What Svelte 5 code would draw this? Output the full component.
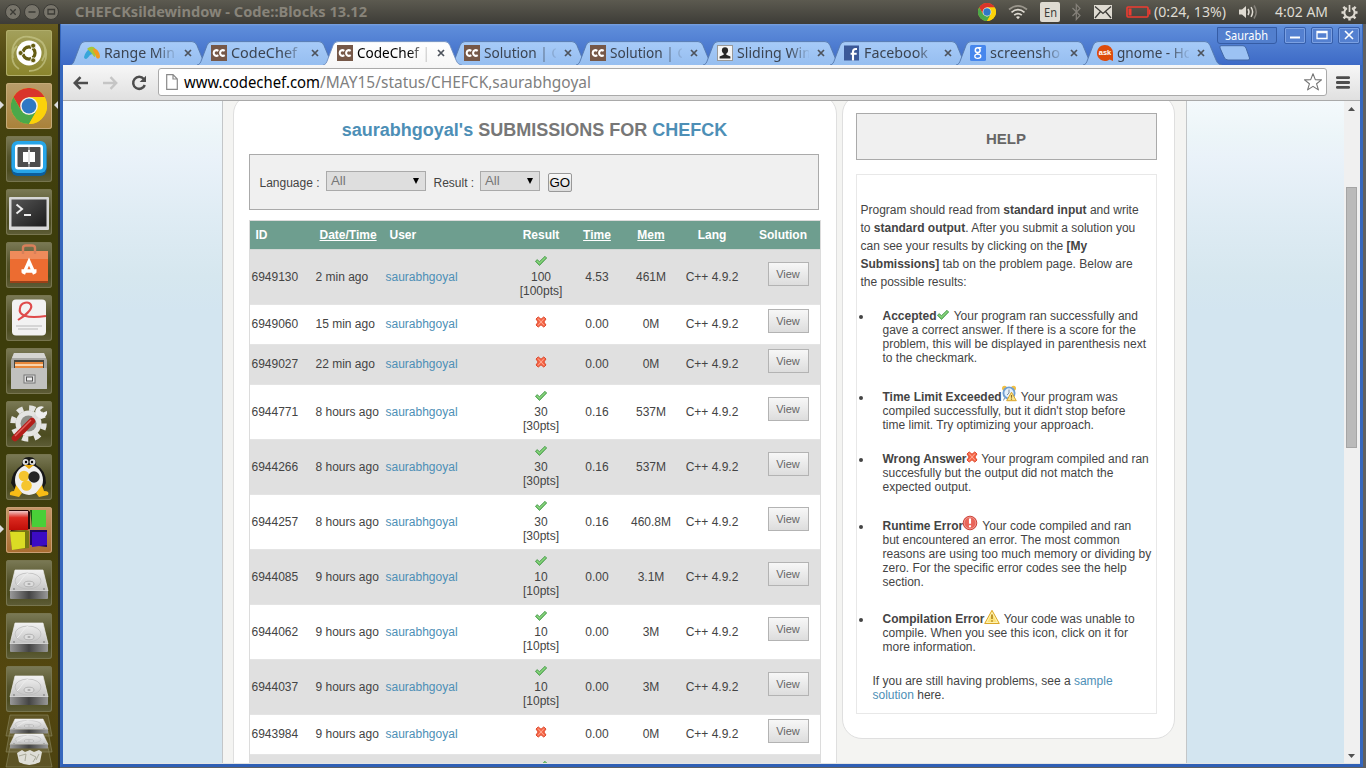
<script>
  const tabs = [
    { icon: 'range', title: 'Range Min', w: 71 },
    { icon: 'cc', title: 'CodeChef', w: 66 },
    { icon: 'cc', title: 'CodeChef |', w: 73, active: true },
    { icon: 'cc', title: 'Solution | C', w: 76 },
    { icon: 'cc', title: 'Solution | C', w: 76 },
    { icon: 'user', title: 'Sliding Win', w: 74 },
    { icon: 'fb', title: 'Facebook', w: 64 },
    { icon: 'google', title: 'screensho', w: 70 },
    { icon: 'ask', title: 'gnome - Ho', w: 75 }
  ];

  const rows = [
    { id: '6949130', when: '2 min ago', score: '100', time: '4.53', mem: '461M' },
    { id: '6949060', when: '15 min ago', time: '0.00', mem: '0M' },
    { id: '6949027', when: '22 min ago', time: '0.00', mem: '0M' },
    { id: '6944771', when: '8 hours ago', score: '30', time: '0.16', mem: '537M' },
    { id: '6944266', when: '8 hours ago', score: '30', time: '0.16', mem: '537M' },
    { id: '6944257', when: '8 hours ago', score: '30', time: '0.16', mem: '460.8M' },
    { id: '6944085', when: '9 hours ago', score: '10', time: '0.00', mem: '3.1M' },
    { id: '6944062', when: '9 hours ago', score: '10', time: '0.00', mem: '3M' },
    { id: '6944037', when: '9 hours ago', score: '10', time: '0.00', mem: '3M' },
    { id: '6943984', when: '9 hours ago', time: '0.00', mem: '0M' }
  ];

  const launchers = ['ubuntu', 'chrome', 'brackets', 'terminal', 'software', 'evince', 'files', 'settings', 'penguin', 'blocks', 'disk', 'disk', 'disk'];
</script>

{#snippet label(text, width, size, cls = '', height = 24)}
  <svg class="label {cls}" {width} {height}>
    <text x="0" y={height / 2 + size * 0.36} font-size={size} textLength={width} lengthAdjust="spacingAndGlyphs">{text}</text>
  </svg>
{/snippet}

{#snippet chromeLogo(size)}
  <svg width={size} height={size} viewBox="0 0 36 36">
    <circle cx="18" cy="18" r="18" fill="#f8c90c" />
    <path d="M2.4 9A18 18 0 0 1 33.6 9L18 9 10.2 13.5 10.2 22.5Z" fill="#d9342b" />
    <path d="M2.4 9 10.2 22.5 18 27 25.8 22.5 18 36A18 18 0 0 1 2.4 9Z" fill="#4ba84a" />
    <path d="M18 9H33.6A18 18 0 0 1 18 36L25.8 22.5Z" fill="#fbd20a" />
    <circle cx="18" cy="18" r="8.8" fill="#f2f2ee" />
    <circle cx="18" cy="18" r="7.4" fill="#2f78c4" />
  </svg>
{/snippet}

{#snippet check()}
  <svg class="ic check" width="14" height="12" viewBox="0 0 14 12">
    <path d="M1.4 6.3 3.3 4.6 5.4 6.7 11 1.3 12.7 3 5.5 10.5Z" fill="#6cc464" stroke="#45954a" stroke-width=".8" stroke-linejoin="round" />
    <path d="M3 5.8 5.4 8.2 11.4 2.4" stroke="#a3dd95" stroke-width=".8" fill="none" />
  </svg>
{/snippet}

{#snippet cross()}
  <svg class="ic cross" width="12" height="12" viewBox="0 0 12 12">
    <path d="M1 3 3.2 .9 6 3.2 8.8 .9 11 3 8.9 6 11 9 8.8 11.1 6 8.8 3.2 11.1 1 9 3.1 6Z" fill="#f7694a" stroke="#da3d20" stroke-width=".9" stroke-linejoin="round" />
    <path d="M3 2.5 9 9.3M9 2.6 3 9.4" stroke="#ffa993" stroke-width="1" />
  </svg>
{/snippet}

{#snippet warning(size)}
  <svg class="ic" width={size} height={size} viewBox="0 0 16 16">
    <path d="M8 1.3 15.3 14.5H.7Z" fill="#fbe276" stroke="#dba729" stroke-linejoin="round" />
    <path d="M8 3.6 13.5 13.5H2.5Z" fill="none" stroke="#fff6c4" stroke-width=".8" />
    <path d="M8 5.6V10M8 11.2V12.7" stroke="#b58a20" stroke-width="1.7" />
  </svg>
{/snippet}

{#snippet favicon(kind)}
  <svg class="fav" width="16" height="16" viewBox="0 0 16 16">
    {#if kind === 'range'}
      <path d="M0 12C1 8 3 5 6 4L9 9C5 9 5 13 2 14 1 14 0 13 0 12Z" fill="#38a6da" />
      <path d="M3 4C7 0 12 2 13 7L11 12C9 12 9 8 3 4Z" fill="#a5c63b" />
      <path d="M9 4C13 3 16 8 16 12 15 14 13 14 12 12 12 8 9 8 9 4Z" fill="#f39a1e" />
    {:else if kind === 'cc'}
      <rect width="16" height="16" fill="#765848" />
      <path d="M7.3 5.9C5 4.3 2.7 5.6 2.7 8S5 11.7 7.3 10.1M13.7 5.9C11.4 4.3 9.1 5.6 9.1 8S11.4 11.7 13.7 10.1" fill="none" stroke="#fff" stroke-width="2.1" />
    {:else if kind === 'user'}
      <rect x=".5" y=".5" width="15" height="15" fill="#f4f4f4" stroke="#999" />
      <circle cx="8" cy="5.4" r="3.1" fill="#272727" />
      <path d="M6.7 7H9.3V9.7L13.4 11.4V13.6H2.6V11.4L6.7 9.7Z" fill="#272727" />
    {:else if kind === 'fb'}
      <rect y=".5" width="15" height="15" fill="#3b5998" />
      <path d="M9 15.5V6.8Q9 4 11.7 4H13M6.6 8.7H12.7" fill="none" stroke="#fff" stroke-width="2.1" />
    {:else if kind === 'google'}
      <rect width="16" height="16" rx="1.5" fill="#4787ed" />
      <circle cx="7.7" cy="5.2" r="2.4" fill="none" stroke="#fff" stroke-width="1.5" />
      <ellipse cx="7.8" cy="11.3" rx="3" ry="2.1" fill="none" stroke="#fff" stroke-width="1.3" />
      <path d="M8 2.6H11.4M8.4 7.3Q5.7 8.2 8.6 9.3" fill="none" stroke="#fff" stroke-width="1.2" />
    {:else}
      <path d="M8 0A8 8 0 0 1 16 8V16L12.6 14.5A8 8 0 1 1 8 0Z" fill="#dd4b0b" />
      <text x="8" y="10.4" text-anchor="middle" font-size="7.5" font-weight="700" fill="#fff" textLength="12.5">ask</text>
    {/if}
  </svg>
{/snippet}

{#snippet diskShape()}
  <path d="M9 10H37L42 31H4Z" fill="url(#silver)" stroke="#eee" stroke-width=".7" />
  <path d="M4 31H42V38Q42 39 41 39H5Q4 39 4 38Z" fill="url(#diskedge)" />
  <ellipse cx="22" cy="21" rx="13" ry="8" fill="none" stroke="#bcbcbc" stroke-width=".8" />
  <ellipse cx="23" cy="24" rx="5" ry="2.8" fill="#ddd" stroke="#aaa" stroke-width=".8" />
  <ellipse cx="23" cy="24" rx="1.6" ry=".9" fill="#aaa" />
  <path d="M11 25C17 20 18 11 30 11" fill="none" stroke="#eee" />
  <circle cx="8" cy="29" r=".9" fill="#888" /><circle cx="38" cy="29" r=".9" fill="#888" />
{/snippet}

<svg class="defs" width="0" height="0">
  <defs>
    <linearGradient id="silver" x2="0" y2="1"><stop stop-color="#f2f2f2" /><stop offset="1" stop-color="#c2c2c2" /></linearGradient>
    <linearGradient id="diskedge"><stop stop-color="#999" /><stop offset=".5" stop-color="#444" /><stop offset="1" stop-color="#999" /></linearGradient>
    <linearGradient id="tabfill" x2="0" y2="1"><stop stop-color="#a7cbf8" /><stop offset="1" stop-color="#96bef0" /></linearGradient>
    <linearGradient id="tabactive" x2="0" y2="1"><stop stop-color="#fff" /><stop offset="1" stop-color="#f7f7f7" /></linearGradient>
    <linearGradient id="termfill" x2="1" y2="1"><stop stop-color="#555" /><stop offset="1" stop-color="#1c1c1c" /></linearGradient>
    <linearGradient id="redface" x2="0" y2="1"><stop stop-color="#f0c8c8" /><stop offset=".35" stop-color="#dc2a20" /><stop offset="1" stop-color="#c00e08" /></linearGradient>
  </defs>
</svg>

<div class="desktop">
  <header class="panel">
    <div class="wmbuttons">
      <svg width="60" height="24" viewBox="0 0 60 24" fill="#77746a" stroke="#3c3b36">
        <circle cx="13" cy="12" r="7.5" /><circle cx="32" cy="12" r="7.5" /><circle cx="51" cy="12" r="7.5" />
        <path d="M10.3 9.3 15.7 14.7M15.7 9.3 10.3 14.7M28.5 12H35.5M48 9.5H54.5V14H48Z" fill="none" stroke-width="1.3" />
      </svg>
    </div>
    {@render label('CHEFCKsildewindow - Code::Blocks 13.12', 292, 14.5, 'wmtitle')}
    <div class="indicators">
      <span>{@render chromeLogo(18)}</span>
      <svg class="wifi" width="20" height="18" viewBox="0 0 20 18" fill="none" stroke="#dfdbd2" stroke-width="1.7">
        <path d="M1 6.5Q10-.8 19 6.5" stroke="#9a968c" /><path d="M3.5 9.3Q10 4 16.5 9.3" /><path d="M6.2 12.2Q10 9 13.8 12.2" /><path d="M8 14 10 16.3 12 14Q10 12.6 8 14Z" fill="#dfdbd2" stroke="none" />
      </svg>
      <span class="lang">{@render label('En', 13, 13, 'dark', 20)}</span>
      <svg class="bt" width="13" height="18" viewBox="0 0 13 18" fill="none" stroke="#85817a" stroke-width="1.2"><path d="M2.5 5 10 12.5 6.3 16.5V1.5L10 5.4 2.5 13" /></svg>
      <svg class="mail" width="18" height="14" viewBox="0 0 18 14"><path fill="#dfdbd2" d="M0 0H18V14H0Z" /><path d="M1 1.5 9 8.5 17 1.5M1 13 6.5 6.5M17 13 11.5 6.5" fill="none" stroke="#3c3b37" stroke-width="1.3" /></svg>
      <svg class="batt" width="25" height="12" viewBox="0 0 25 12"><rect x="1" y="1" width="21" height="10" rx="1" fill="none" stroke="#ef3b30" stroke-width="1.6" /><path fill="#ef3b30" d="M2.5 2.5H5.5V9.5H2.5ZM23 3.5H24.5V8.5H23Z" /></svg>
      {@render label('(0:24, 13%)', 72, 15, 'light')}
      <svg class="vol" width="20" height="16" viewBox="0 0 20 16" fill="none" stroke="#dfdbd2" stroke-width="1.5"><path d="M0 5.5H3L7 2V14L3 10.5H0Z" fill="#dfdbd2" stroke="none" /><path d="M9 5Q11 8 9 11M12 3.2Q15.2 8 12 12.8" /><path d="M15 1.5Q19.5 8 15 14.5" stroke="#85817a" /></svg>
      {@render label('4:02 AM', 53, 15, 'light')}
      <svg class="gear" width="17" height="17" viewBox="0 0 18 18" fill="none" stroke="#dfdbd2"><path d="M6.3 4.3A5.5 5.5 0 1 0 11.7 4.3" stroke-width="2.2" /><path d="M9 1V8.5" stroke-width="1.8" /><path d="M2.5 3 4.5 5M15.5 3 13.5 5M.5 9H3M15 9H17.5M2.7 15.3 4.6 13.4M15.3 15.3 13.4 13.4M9 15V17.6" stroke-width="2.6" /></svg>
    </div>
  </header>

  <div class="workspace">
    <nav class="launcher">
      {#each launchers as app}
        <div class="tile {app}">
          {#if app === 'chrome' || app === 'blocks'}<i class="pip left"></i>{/if}
          {#if app === 'chrome'}<i class="pip right"></i>{/if}
          <svg width="46" height="46" viewBox="0 0 46 46">
            {#if app === 'ubuntu'}
              <path d="M7 28C4 15 12 5 24 7 38 9 43 19 36 31M13 39C5 34 4 23 11 16M23 41C37 41 44 28 38 15" fill="none" stroke="#c9c98d" stroke-width="1.8" opacity=".65" />
              <circle cx="23" cy="23" r="12.5" fill="#fff" />
              <circle cx="23" cy="23" r="6" fill="none" stroke="#655d13" stroke-width="3.3" />
              <path d="M23 23H11M23 23 29 12.5M23 23 29 33.5" stroke="#fff" stroke-width="1.4" />
              <circle cx="23" cy="23" r="4.3" fill="#fff" />
              <g fill="#655d13" stroke="#fff" stroke-width=".8"><circle cx="14.6" cy="23" r="2.5" /><circle cx="27.2" cy="15.7" r="2.5" /><circle cx="27.2" cy="30.3" r="2.5" /></g>
            {:else if app === 'chrome'}
              <g transform="translate(5 5)">{@render chromeLogo(36)}</g>
            {:else if app === 'brackets'}
              <rect x="5.5" y="7" width="35" height="33" rx="6" fill="#0c5e9c" /><rect x="5.5" y="5" width="35" height="32" rx="6" fill="#27a5e8" />
              <rect x="9" y="8.5" width="28" height="25" rx="3" fill="#fff" /><rect x="11.5" y="11" width="23" height="20" rx="1" fill="#4d4d4d" />
              <path d="M17 16H22V14H24V16H29V26H24V28H22V26H17Z" fill="#fff" /><path d="M22.5 11H23.5V31H22.5Z" fill="#c9c9c9" />
            {:else if app === 'terminal'}
              <rect x="3" y="8" width="40" height="33" rx="1" fill="#d7d7d7" /><rect x="5.5" y="10.5" width="35" height="27" fill="url(#termfill)" />
              <path d="M10.5 15.5 16 20 10.5 24.5M18 26H25" fill="none" stroke="#eee" stroke-width="2" />
            {:else if app === 'software'}
              <path d="M4 9H42L42 41H4Z" fill="#ec6c31" /><path d="M4 9H42L42 17H4Z" fill="#ef8b5b" /><path d="M4 39H42V41H4Z" fill="#9b4018" />
              <path d="M17 12V6Q17 3.5 20 3.5H26Q29 3.5 29 6V12" fill="none" stroke="#d77f59" stroke-width="2.4" />
              <path d="M17.5 32 23 19.5 28.5 32M15.5 29H30.5" fill="none" stroke="#fff" stroke-width="3.3" />
            {:else if app === 'evince'}
              <rect x="6" y="4.5" width="34" height="36" rx="4" fill="#f2f2f2" /><path d="M10 31H36M12 34H32" stroke="#ccc" stroke-width="1.3" />
              <path d="M12 25C18 21 27 15 25 10 23 6 15 7 14 13 12 20 20 24 40 21" fill="none" stroke="#df4a4a" stroke-width="2.1" />
            {:else if app === 'files'}
              <path d="M8 5H38L41 12V41H5V12Z" fill="#a7a7a3" /><path d="M8 5H38L40 10H6Z" fill="#d5d5d2" /><rect x="8" y="12" width="30" height="8" fill="#47463f" />
              <path d="M9 14H37V20H9Z" fill="#e7873a" /><path d="M9 17H37" stroke="#fff4df" stroke-width="1.4" />
              <rect x="5" y="20" width="36" height="21" rx="1" fill="#c1c1bf" /><rect x="18" y="27" width="11" height="8" fill="#ddd" stroke="#777" /><rect x="20.5" y="29" width="6" height="4" fill="#eee" stroke="#555" />
            {:else if app === 'settings'}
              <circle cx="22.5" cy="22.5" r="13" fill="#e4e4e2" /><circle cx="22.5" cy="22.5" r="15.5" fill="none" stroke="#e4e4e2" stroke-width="5.5" stroke-dasharray="6.1 6.1" />
              <circle cx="22.5" cy="22.5" r="8" fill="#8d8d86" /><path d="M26 20 33 12" stroke="#dcdcdc" stroke-width="5" /><path d="M38 6A6 6 0 1 0 41 10L36 12 34 9Z" fill="#eee" />
              <path d="M9 37 26 20" stroke="#b31d19" stroke-width="6.5" stroke-linecap="round" /><path d="M9 35 25 19" stroke="#e26460" stroke-width="1.5" />
            {:else if app === 'penguin'}
              <path d="M16 11Q15 3 23 3T30 11Q40 16 40 29L35 39H11L5 29Q6 17 16 11Z" fill="#171717" /><ellipse cx="23" cy="26" rx="14" ry="15" fill="#eee" />
              <circle cx="19.5" cy="8" r="3" fill="#ddd" /><circle cx="26.5" cy="8" r="3" fill="#ddd" /><circle cx="20" cy="8" r="1.2" /><circle cx="26" cy="8" r="1.2" /><path d="M18 11H28L23 15Z" fill="#e8a80a" />
              <circle cx="18" cy="22" r="5.3" fill="#f5c52f" /><circle cx="28" cy="23" r="5.7" fill="#242424" /><circle cx="20.5" cy="31.5" r="5.3" fill="#f5c52f" />
              <path d="M10 31 16 39 13 43 4 41Q3 37 8 37ZM36 31 30 39 33 43 42 41Q44 37 38 37Z" fill="#f6bc16" />
            {:else if app === 'blocks'}
              <path d="M3 3H22L24 5V22L5 24Z" fill="#2b0c0c" /><rect x="3" y="4" width="19" height="19" fill="url(#redface)" />
              <path d="M24 3H40V20H26Z" fill="#155c12" /><rect x="26" y="3" width="14" height="17" fill="#49cf38" />
              <path d="M4 24 20 23 23 24V41L6 43Z" fill="#777911" /><path d="M4 25H19V41L6 43Z" fill="#dbdc24" />
              <path d="M24 23H41V40L24 38Z" fill="#1c0762" /><path d="M26 25H41V38L26 40Z" fill="#3c0bc4" />
            {:else}
              {@render diskShape()}
            {/if}
          </svg>
        </div>
      {/each}
      <div class="folded">
        <svg width="48" height="54" viewBox="0 0 48 54">
          <path d="M5 1H43L47 22H1Z" fill="#9a987a" fill-opacity=".22" stroke="#8d8b61" stroke-opacity=".6" /><path d="M5 17H43L47 38H1Z" fill="#9a987a" fill-opacity=".22" stroke="#8d8b61" stroke-opacity=".6" /><path d="M5 33H43L47 53H1Z" fill="#9a987a" fill-opacity=".22" stroke="#8d8b61" stroke-opacity=".6" />
          <g transform="translate(1 0) scale(1 .5)">{@render diskShape()}</g><g transform="translate(1 15) scale(1 .5)">{@render diskShape()}</g>
          <path d="M12 39 17 36 20 38 25 36 29 38 34 36 37 38 35 48Q24 54 14 48Z" fill="#deded7" /><path d="M14 42 21 40 20 47M25 40 31 43 28 48M34 40 31 46" fill="none" stroke="#a9a999" />
        </svg>
      </div>
    </nav>

    <div class="window">
      <div class="titlebar">
        <div class="tabstrip">
          {#each tabs as tab}
            <div class="tab" class:active={tab.active}>
              <svg class="shape" width="143" height="24" viewBox="0 0 143 24">
                <path d="M0 24C3 23.5 3.5 21.5 4.5 19L10 4.5Q11.3 .6 15 .6H122Q125.6 .6 127 4.5L133 19C134.5 22.6 136 23.5 139 24" fill={tab.active ? 'url(#tabactive)' : 'url(#tabfill)'} stroke={tab.active ? '#6f8fbf' : '#5578ad'} stroke-width=".9" />
              </svg>
              <div class="tabbody">
                {@render favicon(tab.icon)}
                <div class="tabtitle">{@render label(tab.title, tab.w, 15.2, tab.active ? 'black' : 'tabtext')}</div>
                <svg class="close" width="8" height="8" viewBox="0 0 8 8"><path d="M1 1 7 7M7 1 1 7" stroke="#4d535c" stroke-width="1.7" /></svg>
              </div>
            </div>
          {/each}
          <svg class="newtab" width="32" height="16" viewBox="0 0 32 16"><path d="M2 .7H24Q26 .7 27 3L30.5 13Q31 15 29 15H9Q6 15 5 12L1 3Q.4 .7 2 .7Z" fill="#9cc2f3" stroke="#4267a5" /></svg>
        </div>
        <div class="controls">
          <span class="profile">{@render label('Saurabh', 43, 12.5, 'white', 14)}</span>
          <span class="wbtn"><svg width="22" height="16"><path d="M6 10.5H16" stroke="#fff" stroke-width="2" /></svg></span>
          <span class="wbtn"><svg width="22" height="16"><path d="M6 4.5H16V11.5H6Z M6 5.5H16" stroke="#fff" stroke-width="1.3" fill="none" /></svg></span>
          <span class="wbtn"><svg width="22" height="16"><path d="M7 4 15 12M15 4 7 12" stroke="#fff" stroke-width="1.6" /></svg></span>
        </div>
      </div>

      <div class="toolbar">
        <svg class="nav" width="16" height="14" viewBox="0 0 16 14" fill="none" stroke="#4d4d4d" stroke-width="2.6"><path d="M15 7H2.5M7.5 1.2 1.8 7 7.5 12.8" /></svg>
        <svg class="nav" width="16" height="14" viewBox="0 0 16 14" fill="none" stroke="#c5c5c5" stroke-width="2.4"><path d="M1 7H13.5M8.5 1.2 14.2 7 8.5 12.8" /></svg>
        <svg class="nav" width="16" height="16" viewBox="0 0 16 16"><path d="M12.8 4A6 6 0 1 0 13.8 10" fill="none" stroke="#4d4d4d" stroke-width="2.5" /><path d="M15 .7V7H8.6Z" fill="#4d4d4d" /></svg>
        <div class="omnibox">
          <svg class="page" width="12" height="16" viewBox="0 0 12 16"><path d="M.7 .7H7L11.3 5V15.3H.7ZM7 .7V5H11.3" fill="#fff" stroke="#898989" stroke-width="1.2" /></svg>
          {@render label('www.codechef.com', 136, 17, 'black')}
          {@render label('/MAY15/status/CHEFCK,saurabhgoyal', 271, 17, 'grey')}
          <svg class="star" width="20" height="20" viewBox="0 0 20 20"><path d="M10 1.7 12.3 7.6 18.5 7.9 13.6 11.8 15.4 17.9 10 14.4 4.6 17.9 6.4 11.8 1.5 7.9 7.7 7.6Z" fill="#fff" stroke="#747474" stroke-width="1.1" stroke-linejoin="round" /></svg>
        </div>
        <svg class="menu" width="14" height="13" viewBox="0 0 14 13"><path d="M1.3 1.7H12.7M1.3 6.5H12.7M1.3 11.3H12.7" stroke="#4d4d4d" stroke-width="2.8" stroke-linecap="round" /></svg>
      </div>

      <div class="viewport">
        <div class="page-bg">
          <div class="container">
            <main class="card main">
              <h1><a>saurabhgoyal's</a> SUBMISSIONS FOR <a>CHEFCK</a></h1>
              <div class="filter">
                <span class="flabel lang-label">Language :</span>
                <span class="select wide">All<i></i></span>
                <span class="flabel res-label">Result :</span>
                <span class="select">All<i></i></span>
                <button class="go">GO</button>
              </div>
              <div class="table">
                <div class="row head">
                  <b>ID</b><b><u>Date/Time</u></b><b>User</b><b class="c">Result</b><b class="c"><u>Time</u></b><b class="c"><u>Mem</u></b><b class="c">Lang</b><b class="c sol">Solution</b>
                </div>
                {#each rows as r, i}
                  <div class="row" class:odd={i % 2 === 0} class:short={!r.score}>
                    <span>{r.id}</span><span>{r.when}</span><span><a>saurabhgoyal</a></span>
                    <span class="c result">
                      {#if r.score}{@render check()}<span>{r.score}</span><span>[{r.score}pts]</span>{:else}{@render cross()}{/if}
                    </span>
                    <span class="c">{r.time}</span><span class="c">{r.mem}</span><span class="c">C++ 4.9.2</span>
                    <span class="c"><button class="view">View</button></span>
                  </div>
                {/each}
                <div class="row odd"><span></span><span></span><span></span><span class="c result">{@render check()}<span>10</span><span>[10pts]</span></span></div>
              </div>
            </main>

            <aside class="card help">
              <h2>HELP</h2>
              <section>
                <p class="intro">Program should read from <b>standard input</b> and write<br />to <b>standard output</b>. After you submit a solution you<br />can see your results by clicking on the <b>[My<br />Submissions]</b> tab on the problem page. Below are<br />the possible results:</p>
                <ul>
                  <li><b>Accepted</b>{@render check()} Your program ran successfully and<br />gave a correct answer. If there is a score for the<br />problem, this will be displayed in parenthesis next<br />to the checkmark.</li>
                  <li><b>Time Limit Exceeded</b><svg class="ic clock" width="16" height="17" viewBox="0 0 16 17"><circle cx="3.5" cy="3.3" r="2.5" fill="#f0bf45" /><circle cx="12.5" cy="3.3" r="2.5" fill="#f0bf45" /><circle cx="8" cy="8" r="5.6" fill="#e4f0fb" stroke="#6f9fd2" stroke-width="1.9" /><path d="M8 4.5V8L6 10M3.5 13 2.5 15.5" stroke="#7e8d9c" fill="none" /><path d="M10.5 7.2 15.3 15.7H5.7Z" fill="#fae58c" stroke="#d9a42b" /><path d="M10.5 10V12.7M10.5 13.5V14.7" stroke="#8c6b22" stroke-width="1.2" /></svg> Your program was<br />compiled successfully, but it didn't stop before<br />time limit. Try optimizing your approach.</li>
                  <li><b>Wrong Answer</b>{@render cross()} Your program compiled and ran<br />succesfully but the output did not match the<br />expected output.</li>
                  <li><b>Runtime Error</b><svg class="ic err" width="16" height="16" viewBox="0 0 16 16"><circle cx="8" cy="8" r="6.8" fill="#e9655a" stroke="#c94339" /><circle cx="8" cy="8" r="5.8" fill="none" stroke="#f3a59d" stroke-width=".7" /><path d="M8 3.6V8.8M8 10.3V12.2" stroke="#fff" stroke-width="2.1" /></svg> Your code compiled and ran<br />but encountered an error. The most common<br />reasons are using too much memory or dividing by<br />zero. For the specific error codes see the help<br />section.</li>
                  <li><b>Compilation Error</b>{@render warning(16)} Your code was unable to<br />compile. When you see this icon, click on it for<br />more information.</li>
                </ul>
                <p class="outro">If you are still having problems, see a <a>sample<br />solution</a> here.</p>
              </section>
            </aside>
          </div>
        </div>
        <div class="scrollbar">
          <svg width="7" height="4"><path d="M0 4 3.5 0 7 4Z" fill="#505050" /></svg>
          <div class="thumb"></div>
          <svg width="7" height="4"><path d="M0 0 3.5 4 7 0Z" fill="#505050" /></svg>
        </div>
      </div>
    </div>
  </div>
</div>

<style>
  :global(body) { margin: 0; overflow: hidden; }
  .defs { position: absolute; }
  svg { display: block; flex: none; }
  .desktop { width: 1366px; height: 768px; overflow: hidden; display: flex; flex-direction: column; background: #606060; font-family: "Liberation Sans", Arial, sans-serif; }
  .label { font-family: "Noto Sans", "Open Sans", sans-serif; overflow: visible; }
  .label.wmtitle { fill: #88847a; font-weight: 700; }
  .label.light { fill: #dfdbd2; }
  .label.dark { fill: #3c3b37; }
  .label.black { fill: #000; }
  .label.grey { fill: #808080; }
  .label.tabtext { fill: #3b4452; }
  .label.white { fill: #fff; }

  .panel { height: 24px; flex: none; display: flex; background: linear-gradient(#5c5a50, #3d3c37); }
  .wmbuttons { width: 75px; }
  .indicators { margin-left: auto; padding-right: 8px; display: flex; align-items: center; }
  .wifi { margin-left: 12px; }
  .lang { margin-left: 12px; width: 20px; height: 20px; border-radius: 2px; background: #dfdbd2; display: flex; justify-content: center; }
  .bt { margin-left: 10px; }
  .mail { margin-left: 11px; }
  .batt { margin: 0 3px 0 14px; }
  .vol { margin: 0 16px 0 13px; }
  .gear { margin-left: 13px; }

  .workspace { flex: 1; display: flex; min-height: 0; }
  .launcher { width: 60px; flex: none; box-sizing: border-box; padding: 6px 0 0 6px; border-right: 2px solid #2b2c1f; background: linear-gradient(#675c1e 0, #4a4510 50px, #3d3d0b 200px, #3d3d0b 470px, #54470f 650px, #4c420f); display: flex; flex-direction: column; gap: 7px; }
  .tile { position: relative; width: 46px; height: 46px; flex: none; border-radius: 3px; background: linear-gradient(#7b7a56, #55542c 45%, #4c4c20 75%, #5e5d38); box-shadow: inset 0 0 0 1px #77754f; }
  .tile.ubuntu { background: linear-gradient(#a3a05c, #8a842c); box-shadow: inset 0 0 0 1px #b0ad6a; }
  .tile.chrome { background: linear-gradient(#b99d6b, #a98139); box-shadow: inset 0 0 0 1px #c4aa78; }
  .tile.blocks { background: linear-gradient(#c59769, #a96c2f); box-shadow: inset 0 0 0 1px #c99f74; }
  .pip { position: absolute; top: 18px; border: 4px solid transparent; }
  .pip.left { left: -6px; border-left-color: #ddd; border-right-width: 0; }
  .pip.right { right: -6px; border-right-color: #ddd; border-left-width: 0; }
  .folded { margin: -5px 0 0 -1px; height: 54px; }

  .window { width: 1303px; flex: none; box-sizing: border-box; border: solid #3667bd; border-width: 0 3px 3px; display: flex; flex-direction: column; border-bottom-color: #2f5fb5; margin-bottom: 1px; }
  .titlebar { height: 41px; flex: none; display: grid; margin: 0 -2px; padding: 0 2px; background: linear-gradient(#7ba2df 0, #5f8edb 2px, #3d6ac6); }
  .tabstrip { grid-area: 1 / 1; display: flex; align-self: end; padding-left: 7px; }
  .tab { width: 126.6px; height: 24px; flex: none; display: grid; position: relative; }
  .tab.active { z-index: 2; }
  .shape { grid-area: 1 / 1; }
  .tabbody { grid-area: 1 / 1; z-index: 1; display: flex; align-items: center; padding-left: 14px; }
  .tabtitle { width: 72px; margin-left: 4px; overflow: hidden; mask-image: linear-gradient(90deg, #000 52px, transparent 74px); }
  .close { margin-left: 8px; }
  .newtab { margin: 4px 0 0 9.5px; }
  .controls { grid-area: 1 / 1; z-index: 3; justify-self: end; align-self: start; display: flex; margin-top: 3px; }
  .profile { box-sizing: border-box; width: 60px; height: 17px; padding-left: 7px; border: 1px solid #355ca5; border-radius: 0 0 3px 3px; background: #527fce; margin-right: 7px; }
  .wbtn { box-sizing: border-box; width: 22px; height: 17px; margin-right: 5px; border: 1px solid #365eaa; box-shadow: inset 0 0 0 1px #7ba0e2; border-radius: 2px; background: #5480d0; }
  .wbtn svg { margin: -1px; }
  .wbtn:last-child { margin-right: 0; }

  .toolbar { height: 36px; flex: none; box-sizing: border-box; border-bottom: 1px solid #a9a9a9; background: linear-gradient(#f7f7f7, #e0e0e0); display: flex; align-items: center; padding-left: 10px; }
  .nav { margin-right: 13px; }
  .omnibox { width: 1169px; height: 28px; box-sizing: border-box; margin: -1px 9px 0 -2px; border: 1px solid #aaa; border-radius: 3px; background: #fff; display: flex; align-items: center; padding-left: 7px; flex: none; }
  .page { margin-right: 6px; }
  .star { margin: 0 3px 0 auto; }

  .viewport { flex: 1; display: flex; min-height: 0; overflow: hidden; border-bottom: 1px solid #e4e4e4; }
  .page-bg { width: 1281px; flex: none; background: linear-gradient(#f4f9fc, #ecf5f8 35px, #eaf2f9 55px, #dfecf4 115px, #d6e7ef 175px, #d3e5f0 210px); }
  .container { width: 965px; height: 663px; margin-left: 159px; border: solid #c3c6c8; border-width: 0 1px; background: #f4f4f2; display: flex; align-items: flex-start; gap: 5px; padding-left: 10px; box-sizing: border-box; }
  .card { box-sizing: border-box; background: #fff; border: 1px solid #dfdfdf; border-radius: 20px; margin-top: -7px; font-size: 12px; color: #444; }
  a { color: #4d8fb6; }
  .main { width: 604px; height: 700px; padding: 0 15px; }
  h1 { margin: 0; padding-top: 25px; height: 34px; font-size: 18px; line-height: 20px; text-align: center; color: #777; text-indent: -1px; }
  .filter { width: 570px; height: 56px; box-sizing: border-box; border: 1px solid #aaa; background: #f0f0f0; display: flex; align-items: center; padding-left: 9.5px; color: #444; }
  .flabel { margin-top: 2px; }
  .lang-label { width: 66.5px; }
  .res-label { width: 46.5px; margin-left: 7.5px; }
  .select { width: 60px; height: 20px; box-sizing: border-box; border: 1px solid #aaa; background: #dedede; font-size: 13.3px; line-height: 18px; color: #777; display: flex; justify-content: space-between; align-items: center; padding: 0 6px 0 4px; margin-top: -2px; }
  .select.wide { width: 100px; }
  .select i { border: 3.5px solid transparent; border-top: 6px solid #000; border-bottom: 0; margin-top: -1px; }
  button { font-family: inherit; box-sizing: border-box; padding: 0; }
  .go { margin: 1px 0 0 8px; width: 24px; height: 19px; border: 1px solid #999; border-radius: 2px; background: linear-gradient(#f8f8f8, #ddd); font-size: 13.3px; line-height: 16px; color: #000; white-space: nowrap; text-indent: -0.5px; }
  .table { width: 572px; box-sizing: border-box; margin-top: 10px; border: solid #dcdcdc; border-width: 1px 1px 0; }
  .row { height: 55px; box-sizing: border-box; border-bottom: 1px solid #e4e4e4; display: grid; grid-template-columns: 64px 70px 129.5px 52px 60px 48px 74px 1fr; align-items: center; padding-left: 1.5px; line-height: 14px; white-space: nowrap; }
  .row.odd { background: #e0e0e0; }
  .row.short { height: 40px; padding-bottom: 2px; }
  .row.head { height: 29px; background: #6e9e8f; color: #fff; border-bottom-color: #d2d8d5; }
  .head > b:nth-child(-n+3) { padding-left: 4px; }
  .row .c { text-align: center; }
  .row > .c:nth-child(8) { padding-left: 7px; }
  .row > .c.sol { padding: 0 3px 0 0; }
  .result { display: flex; flex-direction: column; align-items: center; }
  .result .check { margin: -1px 0 3px; }
  .result > span:last-child { margin-bottom: 1px; }
  .result .cross { margin-bottom: 3px; }
  .view { display: block; width: 41px; height: 24px; margin: -7px auto 0; border: 1px solid #b3b3b3; background: linear-gradient(#f7f7f7, #ddd); color: #666; font-size: 11px; line-height: 20px; }
  .short .view { margin-top: -6px; }

  .help { width: 333px; height: 645px; padding: 18px 13px 0; }
  h2 { box-sizing: border-box; margin: 0 0 14px; width: 301px; height: 47px; border: 1px solid #aaa; background: #f0f0f0; font-size: 15px; line-height: 50px; text-align: center; color: #666; text-indent: -1px; }
  section { width: 301px; height: 540px; box-sizing: border-box; border: 1px solid #e8e8e8; padding: 26px 0 0 3.5px; white-space: nowrap; line-height: 14px; }
  p { margin: 0; }
  .intro { line-height: 18px; }
  ul { margin: 18px 0 0; padding: 0 0 0 22px; list-style: none; }
  li { position: relative; margin-bottom: 25px; }
  li::before { content: ""; position: absolute; left: -24px; top: 6px; width: 4px; height: 4px; border-radius: 50%; background: #444; }
  li:nth-child(2) { margin-bottom: 20px; }
  li:nth-child(4) { margin-bottom: 23px; }
  li:nth-child(5) { margin-bottom: 20px; }
  li .ic { display: inline-block; position: relative; top: -4px; left: -1px; vertical-align: -2px; margin-top: -6px; margin-bottom: -4px; }
  li .check { margin-left: 1px; margin-right: -1px; vertical-align: 0; left: -1.5px; top: -3px; }
  li .cross { vertical-align: 0; margin-right: -0.5px; }
  li .clock, li .err { vertical-align: -3px; top: -6px; }
  .outro { padding-left: 12px; }

  .scrollbar { width: 16px; background: #f0f0f0; display: flex; flex-direction: column; align-items: center; flex: none; box-sizing: border-box; padding: 6px 2px 5px 0; }
  .thumb { width: 11px; height: 261px; box-sizing: border-box; border: 1px solid #a5a5a5; background: #bababa; margin: 76px 0 auto; }
</style>
